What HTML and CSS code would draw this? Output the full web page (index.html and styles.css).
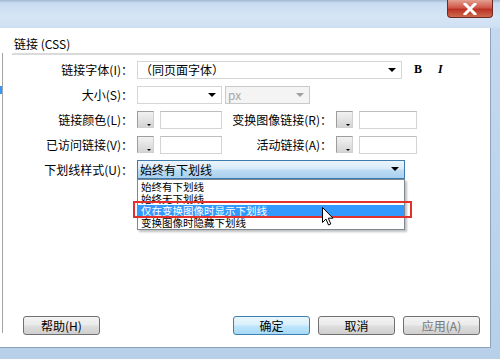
FILE: index.html
```html
<!DOCTYPE html>
<html lang="zh-CN">
<head>
    <meta charset="UTF-8">
    <title>链接 (CSS)</title>
    <link rel="stylesheet" href="styles.css">
</head>
<body>
    <div class="titlebar">
        <div class="close-btn">
            <svg width="14" height="12" viewBox="0 0 14 12"><path d="M2 1 L12 11 M12 1 L2 11" stroke="#fff" stroke-width="3" stroke-linecap="square"/></svg>
        </div>
    </div>
    <div class="window">
        <div class="client">
            <div class="catlist"><div class="cat-sel"></div></div>
            <div class="panel">
                <div class="section-title">链接 (CSS)</div>

                <div class="form">
                    <div class="row">
                        <span class="lbl">链接字体(I)：</span>
                        <div class="select sel-font"><span>（同页面字体）</span><i class="arrow"></i></div>
                        <span class="fmt fmt-b">B</span>
                        <span class="fmt fmt-i">I</span>
                    </div>
                    <div class="row">
                        <span class="lbl">大小(S)：</span>
                        <div class="select sel-size"><span></span><i class="arrow"></i></div>
                        <div class="select sel-unit disabled"><span>px</span><i class="arrow"></i></div>
                    </div>
                    <div class="row">
                        <span class="lbl">链接颜色(L)：</span>
                        <div class="swatch"></div>
                        <div class="textbox"></div>
                        <span class="lbl lbl2">变换图像链接(R)：</span>
                        <div class="swatch"></div>
                        <div class="textbox short"></div>
                    </div>
                    <div class="row">
                        <span class="lbl">已访问链接(V)：</span>
                        <div class="swatch"></div>
                        <div class="textbox"></div>
                        <span class="lbl lbl2">活动链接(A)：</span>
                        <div class="swatch"></div>
                        <div class="textbox short"></div>
                    </div>
                    <div class="row">
                        <span class="lbl">下划线样式(U)：</span>
                        <div class="select sel-under focus">
                            <span>始终有下划线</span><i class="arrow"></i>
                            <ul class="dropdown">
                                <li>始终有下划线</li>
                                <li>始终无下划线</li>
                                <li class="hl">仅在变换图像时显示下划线</li>
                                <li>变换图像时隐藏下划线</li>
                            </ul>
                            <div class="mark"></div>
                            <svg class="cursor" width="12" height="19" viewBox="0 0 12 19"><path d="M0.5 0.5 L0.5 15.5 L4 12 L6.5 18 L8.8 17 L6.3 11.2 L11 11.2 Z" fill="#fff" stroke="#000" stroke-width="1"/></svg>
                        </div>
                    </div>
                </div>

                <div class="buttons">
                    <button class="btn">帮助(H)</button>
                    <div class="btn-group">
                        <button class="btn default">确定</button>
                        <button class="btn">取消</button>
                        <button class="btn faded">应用(A)</button>
                    </div>
                </div>
            </div>
        </div>
    </div>
</body>
</html>
```

FILE: styles.css
```css
body{
    margin: 0;
    width: 500px;
    height: 359px;
    overflow: hidden;
    font-family: "Noto Sans CJK SC", "Liberation Sans", sans-serif;
    font-size: 12px;
    color: #000;
    background: linear-gradient(#c6daf0, #b7cfe9);
}
.titlebar{
    height: 28px;
    display: flex;
    justify-content: flex-end;
    padding-right: 7px;
    background: linear-gradient(#9fb8d2 0, #c9dcf0 3px, #d7e6f6 60%, #cddff2);
}
.close-btn{
    width: 46px;
    height: 18px;
    display: flex;
    align-items: center;
    justify-content: center;
    border: 1px solid #6d2a22;
    border-top: none;
    border-radius: 0 0 4px 4px;
    background: linear-gradient(#e3a090, #d0584a 45%, #bb3224 55%, #cf6a4e);
    box-sizing: border-box;
}
.window{
    display: flex;
}
.client{
    width: 491px;
    height: 320px;
    display: flex;
    background: #fff;
    border-right: 1px solid #8ea3bd;
    border-bottom: 1px solid #8ea3bd;
    box-sizing: border-box;
}
.catlist{
    width: 2px;
    height: 280px;
    margin-top: 25px;
    border-right: 1px solid #a5a5a5;
}
.cat-sel{
    margin-top: 33px;
    height: 8px;
    background: #3399ff;
}
.panel{
    flex: 1;
    display: flex;
    flex-direction: column;
    padding: 8px 10px 12px 9px;
}
.section-title{
    height: 17px;
    line-height: 16px;
    padding-left: 2px;
    border-bottom: 2px solid #dadada;
}
.form{
    margin-top: 2px;
}
.row{
    height: 25px;
    display: flex;
    align-items: center;
}
.lbl{
    width: 121px;
    text-align: right;
    white-space: nowrap;
}
.lbl2{
    width: 110px;
}
.select, .textbox, .swatch{
    margin-left: 4px;
}
.select{
    position: relative;
    height: 18px;
    line-height: 16px;
    border: 1px solid #d6d6d6;
    box-sizing: border-box;
    padding-left: 2px;
    background: #fff;
}
.arrow{
    position: absolute;
    right: 5px;
    top: 6px;
    border-left: 4px solid transparent;
    border-right: 4px solid transparent;
    border-top: 4px solid #000;
}
.sel-font{
    width: 265px;
}
.sel-size{
    width: 85px;
}
.sel-unit{
    width: 85px;
    margin-left: 3px;
}
.disabled{
    background: #f4f4f4;
    border-color: #c9c9c9;
    color: #a8a8a8;
}
.disabled .arrow{
    border-top-color: #a0a0a0;
}
.fmt{
    font-family: "Liberation Serif", serif;
    font-weight: bold;
    font-size: 12px;
}
.fmt-b{
    margin-left: 12px;
}
.fmt-i{
    margin-left: 16px;
    font-style: italic;
}
.swatch{
    position: relative;
    width: 17px;
    height: 17px;
    box-sizing: border-box;
    border: 1px solid #9d9d9d;
    border-right-color: #d0d0d0;
    border-bottom-color: #d0d0d0;
    background: linear-gradient(#f2f2f2, #d4d4d4);
}
.swatch::after{
    content: "";
    position: absolute;
    right: 2px;
    bottom: 1px;
    border-left: 2px solid transparent;
    border-right: 2px solid transparent;
    border-top: 2px solid #000;
}
.textbox{
    width: 62px;
    height: 18px;
    margin-left: 6px;
    box-sizing: border-box;
    border: 1px solid #d4d4d4;
    border-top-color: #bdbdbd;
}
.textbox.short{
    width: 58px;
}
.sel-under{
    width: 268px;
    height: 19px;
    line-height: 17px;
}
.focus{
    border-color: #3d7bad;
    background: linear-gradient(#eaf4fc, #d9ebf9 45%, #bcdcf4 55%, #a9d0ef);
}
.dropdown{
    position: absolute;
    left: -1px;
    top: 18px;
    width: 268px;
    margin: 0;
    padding: 1px 0 0;
    list-style: none;
    background: #fff;
    border: 1px solid #7f8790;
    box-sizing: border-box;
    box-shadow: 2px 2px 2px rgba(0, 0, 0, 0.25);
}
.dropdown li{
    height: 12px;
    line-height: 12px;
    font-family: "Liberation Sans", "Noto Sans CJK SC", sans-serif;
    font-size: 10.5px;
    padding-left: 3px;
    white-space: nowrap;
}
.dropdown li.hl{
    background: #3399ff;
    color: #fff;
}
.mark{
    position: absolute;
    left: -5px;
    top: 40px;
    width: 279px;
    height: 17px;
    box-sizing: border-box;
    border: 2px solid #e2312c;
}
.cursor{
    position: absolute;
    left: 184px;
    top: 46px;
}
.buttons{
    margin-top: auto;
    display: flex;
    justify-content: space-between;
    padding-left: 11px;
}
.btn-group{
    display: flex;
    gap: 8px;
}
.btn{
    width: 77px;
    height: 19px;
    padding: 0;
    font-family: inherit;
    font-size: 12px;
    color: #000;
    border: 1px solid #707070;
    border-radius: 3px;
    background: linear-gradient(#f3f3f3, #ebebeb 45%, #dddddd 55%, #cfcfcf);
}
.btn.default{
    border-color: #3c7fb1;
    background: linear-gradient(#eaf6fd, #d9f0fc 45%, #bee6fd 55%, #a7d9f5);
}
.btn.faded{
    color: #777;
}
```
